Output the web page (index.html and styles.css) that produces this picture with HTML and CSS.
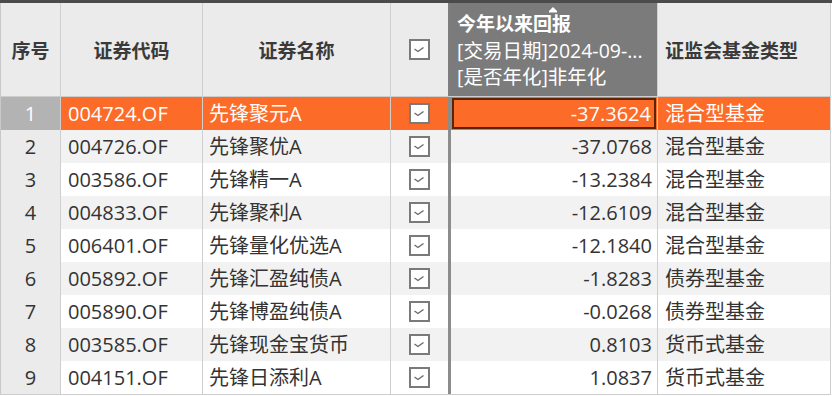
FILE: index.html
```html
<!DOCTYPE html>
<html lang="zh-CN">
<head>
<meta charset="utf-8">
<title>证券列表</title>
<link rel="stylesheet" href="styles.css">
</head>
<body>
<div class="topbar"></div>
<div class="grid">
  <div class="row head">
    <div class="cell c0 hc">序号</div>
    <div class="cell c1 hc">证券代码</div>
    <div class="cell c2 hc">证券名称</div>
    <div class="cell c3 hc"><span class="box"><svg viewBox="0 0 17 17" width="17" height="17"><polyline points="3.5,8 7,10.5 12.5,6.5" fill="none" stroke="#6a6a6a" stroke-width="1.4"/></svg></span></div>
    <div class="cell div hdiv"></div>
    <div class="cell c5 hnum">
      <svg class="sort" viewBox="0 0 8 6" width="8" height="6"><polygon points="4,0 8,4 0,4" fill="#fff"/><rect x="0" y="4" width="8" height="1.5" fill="#fff"/></svg>
      <div class="l1">今年以来回报</div>
      <div class="l2">[交易日期]2024-09-...</div>
      <div class="l2">[是否年化]非年化</div>
    </div>
    <div class="cell c6 hl">证监会基金类型</div>
  </div>

  <div class="row sel">
    <div class="cell c0 idx">1</div>
    <div class="cell c1">004724.OF</div>
    <div class="cell c2">先锋聚元A</div>
    <div class="cell c3"><span class="box"><svg viewBox="0 0 17 17" width="17" height="17"><polyline points="3.5,8 7,10.5 12.5,6.5" fill="none" stroke="#6a6a6a" stroke-width="1.4"/></svg></span></div>
    <div class="cell div"></div>
    <div class="cell c5 num"><span class="focus">-37.3624</span></div>
    <div class="cell c6">混合型基金</div>
  </div>
  <div class="row alt">
    <div class="cell c0 idx">2</div>
    <div class="cell c1">004726.OF</div>
    <div class="cell c2">先锋聚优A</div>
    <div class="cell c3"><span class="box"><svg viewBox="0 0 17 17" width="17" height="17"><polyline points="3.5,8 7,10.5 12.5,6.5" fill="none" stroke="#6a6a6a" stroke-width="1.4"/></svg></span></div>
    <div class="cell div"></div>
    <div class="cell c5 num">-37.0768</div>
    <div class="cell c6">混合型基金</div>
  </div>
  <div class="row">
    <div class="cell c0 idx">3</div>
    <div class="cell c1">003586.OF</div>
    <div class="cell c2">先锋精一A</div>
    <div class="cell c3"><span class="box"><svg viewBox="0 0 17 17" width="17" height="17"><polyline points="3.5,8 7,10.5 12.5,6.5" fill="none" stroke="#6a6a6a" stroke-width="1.4"/></svg></span></div>
    <div class="cell div"></div>
    <div class="cell c5 num">-13.2384</div>
    <div class="cell c6">混合型基金</div>
  </div>
  <div class="row alt">
    <div class="cell c0 idx">4</div>
    <div class="cell c1">004833.OF</div>
    <div class="cell c2">先锋聚利A</div>
    <div class="cell c3"><span class="box"><svg viewBox="0 0 17 17" width="17" height="17"><polyline points="3.5,8 7,10.5 12.5,6.5" fill="none" stroke="#6a6a6a" stroke-width="1.4"/></svg></span></div>
    <div class="cell div"></div>
    <div class="cell c5 num">-12.6109</div>
    <div class="cell c6">混合型基金</div>
  </div>
  <div class="row">
    <div class="cell c0 idx">5</div>
    <div class="cell c1">006401.OF</div>
    <div class="cell c2">先锋量化优选A</div>
    <div class="cell c3"><span class="box"><svg viewBox="0 0 17 17" width="17" height="17"><polyline points="3.5,8 7,10.5 12.5,6.5" fill="none" stroke="#6a6a6a" stroke-width="1.4"/></svg></span></div>
    <div class="cell div"></div>
    <div class="cell c5 num">-12.1840</div>
    <div class="cell c6">混合型基金</div>
  </div>
  <div class="row alt">
    <div class="cell c0 idx">6</div>
    <div class="cell c1">005892.OF</div>
    <div class="cell c2">先锋汇盈纯债A</div>
    <div class="cell c3"><span class="box"><svg viewBox="0 0 17 17" width="17" height="17"><polyline points="3.5,8 7,10.5 12.5,6.5" fill="none" stroke="#6a6a6a" stroke-width="1.4"/></svg></span></div>
    <div class="cell div"></div>
    <div class="cell c5 num">-1.8283</div>
    <div class="cell c6">债券型基金</div>
  </div>
  <div class="row">
    <div class="cell c0 idx">7</div>
    <div class="cell c1">005890.OF</div>
    <div class="cell c2">先锋博盈纯债A</div>
    <div class="cell c3"><span class="box"><svg viewBox="0 0 17 17" width="17" height="17"><polyline points="3.5,8 7,10.5 12.5,6.5" fill="none" stroke="#6a6a6a" stroke-width="1.4"/></svg></span></div>
    <div class="cell div"></div>
    <div class="cell c5 num">-0.0268</div>
    <div class="cell c6">债券型基金</div>
  </div>
  <div class="row alt">
    <div class="cell c0 idx">8</div>
    <div class="cell c1">003585.OF</div>
    <div class="cell c2">先锋现金宝货币</div>
    <div class="cell c3"><span class="box"><svg viewBox="0 0 17 17" width="17" height="17"><polyline points="3.5,8 7,10.5 12.5,6.5" fill="none" stroke="#6a6a6a" stroke-width="1.4"/></svg></span></div>
    <div class="cell div"></div>
    <div class="cell c5 num">0.8103</div>
    <div class="cell c6">货币式基金</div>
  </div>
  <div class="row last">
    <div class="cell c0 idx">9</div>
    <div class="cell c1">004151.OF</div>
    <div class="cell c2">先锋日添利A</div>
    <div class="cell c3"><span class="box"><svg viewBox="0 0 17 17" width="17" height="17"><polyline points="3.5,8 7,10.5 12.5,6.5" fill="none" stroke="#6a6a6a" stroke-width="1.4"/></svg></span></div>
    <div class="cell div"></div>
    <div class="cell c5 num">1.0837</div>
    <div class="cell c6">货币式基金</div>
  </div>
</div>
</body>
</html>
```
FILE: styles.css
```css
* { box-sizing: border-box; }
html, body {
  margin: 0;
  padding: 0;
  background: #ffffff;
  width: 832px;
  height: 396px;
  overflow: hidden;
}
body {
  font-family: "Open Sans", "Noto Sans CJK SC", sans-serif;
  font-size: 20px;
  color: #333333;
}
.topbar {
  height: 3px;
  background: #4b4b4b;
}
.grid {
  width: 831px;
  border-left: 1px solid #c9c9c9;
  border-bottom: 1px solid #cdcdcd;
}
.row {
  display: grid;
  grid-template-columns: 60px 142px 188px 57px 3px 207px 173px;
  height: 33px;
  background: #ffffff;
}
.row.alt { background: #f2f2f2; }
.row.head {
  height: 94px;
  background: #ebebeb;
  border-bottom: 1px solid #cdcdcd;
}
.cell {
  display: flex;
  align-items: center;
  padding-left: 7px;
  white-space: nowrap;
  overflow: hidden;
  border-right: 1px solid #cfcfcf;
  line-height: 1;
}
.c3 { border-right: none; justify-content: center; padding-left: 0; }
.div { background: #8c8c8c; border-right: none; padding: 0; }
.hdiv { background: #7d7d7d; }
.c0.idx {
  background: #ebebeb;
  justify-content: center;
  padding-left: 0;
}
.c2 { padding-left: 6px; }
.num {
  justify-content: flex-end;
  padding-left: 0;
  padding-right: 5px;
}
.hc {
  justify-content: center;
  padding-left: 0;
  font-family: "Noto Sans CJK SC", sans-serif;
  font-weight: 700;
  font-size: 19px;
  color: #3a3a3a;
}
.hl {
  font-family: "Noto Sans CJK SC", sans-serif;
  font-weight: 700;
  font-size: 19px;
  color: #3a3a3a;
  padding-left: 7px;
}
.hnum {
  position: relative;
  background: #7b7b7b;
  color: #ffffff;
  flex-direction: column;
  align-items: flex-start;
  justify-content: flex-start;
  padding-top: 8px;
  padding-left: 6px;
  border-right: 1px solid #cfcfcf;
}
.hnum .l1 {
  font-family: "Noto Sans CJK SC", sans-serif;
  font-weight: 700;
  font-size: 19px;
  height: 27px;
  line-height: 24px;
}
.hnum .l2 {
  font-size: 19.5px;
  height: 26px;
  line-height: 26px;
}
.sort {
  position: absolute;
  left: 98px;
  top: 4px;
}
.box {
  display: flex;
  width: 21px;
  height: 21px;
  border: 2px solid #7a7a7a;
  background: #ffffff;
  align-items: center;
  justify-content: center;
}
.row.sel { background: #fd6b28; color: #ffffff; }
.row.sel .c0.idx { background: #b3b3b3; color: #ffffff; }
.row.sel .num { padding: 1px 1px 1px 1px; }
.focus {
  display: flex;
  align-items: center;
  justify-content: flex-end;
  width: 100%;
  height: 100%;
  border: 2px solid #5a2405;
  padding-right: 3px;
}
```
